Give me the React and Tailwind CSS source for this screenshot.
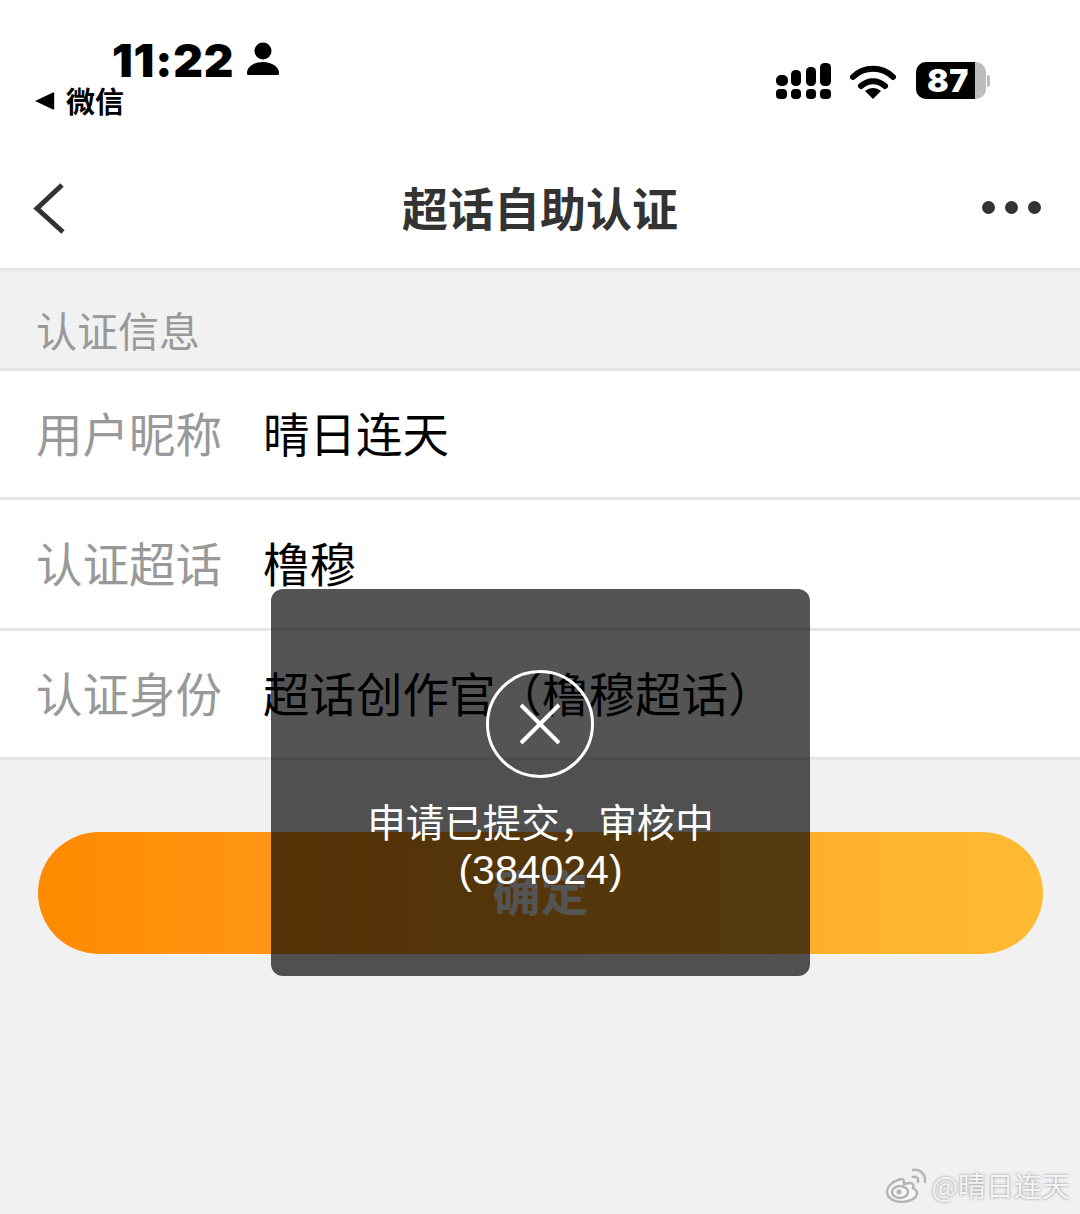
import React from 'react';

const CJK = { fontFamily: '"Noto Sans CJK SC", "Noto Sans", sans-serif' };

// Barre de statut
const StatusBar = () => (
  <div className="flex h-[150px] justify-between bg-white">
    <div className="flex flex-col pl-[35px] pt-[37px]">
      <div className="ml-[77px] flex h-[46px] items-center gap-[13px]">
        <span className="text-[46px] leading-[46px] font-black tracking-[0.8px] text-black" style={{ fontFamily: 'Inter, sans-serif' }}>11:22</span>
        <svg width="32" height="34" viewBox="0 0 32 34" className="mb-[2px]">
          <circle cx="16" cy="9" r="8.5" fill="#000" />
          <path d="M1 33c-1 0-1-1-1-2 0-6 7-11 16-11s16 5 16 11c0 1 0 2-1 2z" fill="#000" />
        </svg>
      </div>
      <div className="flex h-[35px] items-center gap-[11px]">
        <svg width="20" height="20" viewBox="0 0 20 20"><path d="M0 10 18 1.5c.8-.3 1.2 0 1.2.8v15.4c0 .8-.4 1.100-1.200.8z" fill="#000" /></svg>
        <span className="text-[29px] leading-[35px] font-bold text-black" style={CJK}>微信</span>
      </div>
    </div>
    <div className="flex items-start gap-[18px] pt-[62px] pr-[90px]">
      <svg width="56" height="38" viewBox="0 0 56 38" className="ml-[-1px]">
        <rect x="0" y="13" width="12" height="11" rx="5" fill="#000" />
        <rect x="15" y="8" width="10" height="16" rx="4.5" fill="#000" />
        <rect x="30" y="5" width="10" height="19" rx="4.5" fill="#000" />
        <rect x="44" y="1" width="11" height="23" rx="4.5" fill="#000" />
        <rect x="0" y="27" width="11" height="10" rx="4" fill="#000" />
        <rect x="15" y="27" width="10" height="10" rx="4" fill="#000" />
        <rect x="30" y="27" width="10" height="10" rx="4" fill="#000" />
        <rect x="44" y="27" width="11" height="10" rx="4" fill="#000" />
      </svg>
      <svg width="46" height="38" viewBox="0 0 46 38" className="mt-[1px]">
        <path d="M3 14C14 3 32 3 43 14" fill="none" stroke="#000" strokeWidth="6" strokeLinecap="round" />
        <path d="M11 23c7-6.500 17-6.500 24 0" fill="none" stroke="#000" strokeWidth="6" strokeLinecap="round" />
        <path d="M15 28c5-4 11-4 16 0L23 36z" fill="#000" />
      </svg>
      <div className="ml-[2px] flex items-center">
        <div className="flex h-[37px] w-[70px] items-center rounded-[10px] bg-[#bdbdbd]">
          <div className="flex h-full w-[59px] items-center rounded-l-[10px] bg-black pl-[11px]">
            <span className="text-[32px] leading-none font-black tracking-[0.5px] text-white" style={{ fontFamily: 'Inter, sans-serif' }}>87</span>
          </div>
        </div>
        <div className="ml-[1px] h-[12px] w-[3px] rounded-r-[3px] bg-[#bdbdbd]" />
      </div>
    </div>
  </div>
);

// Barre de navigation
const NavBar = () => (
  <div className="grid h-[121px] grid-cols-3 items-center border-b-[3px] border-[#e6e6e6] bg-white pr-[39px] pl-[33px]">
    <svg width="33" height="52" viewBox="0 0 33 52" className="mt-[-1px]">
      <path d="M29 2 4 25.500 30 49" fill="none" stroke="#333" strokeWidth="5" />
    </svg>
    <span className="ml-[6px] mt-[-7px] justify-self-center text-[46px] leading-none font-bold whitespace-nowrap text-[#333]" style={CJK}>超话自助认证</span>
    <div className="mt-[-3px] flex gap-[10px] justify-self-end">
      <span className="h-[13px] w-[13px] rounded-full bg-[#333]" />
      <span className="h-[13px] w-[13px] rounded-full bg-[#333]" />
      <span className="h-[13px] w-[13px] rounded-full bg-[#333]" />
    </div>
  </div>
);

const InfoRow = ({ label, value, h }) => (
  <div className={`flex items-center border-b-[3px] border-[#e6e6e6] bg-white pb-[4px] pl-[36px] ${h}`}>
    <span className="w-[227px] text-[46.5px] leading-none text-[#999]" style={CJK}>{label}</span>
    <span className="text-[46.5px] leading-none whitespace-nowrap text-black" style={CJK}>{value}</span>
  </div>
);

// Toast d'erreur par-dessus le formulaire
const Toast = () => (
  <div className="absolute top-[589px] left-[271px] flex h-[387px] w-[539px] flex-col items-center rounded-[12px] bg-[rgba(0,0,0,0.67)] pt-[81px]">
    <svg width="108" height="108" viewBox="0 0 108 108" className="ml-[-1px]">
      <circle cx="54" cy="54" r="52.500" fill="none" stroke="#fff" strokeWidth="3" />
      <path d="M35 35 73 73M73 35 35 73" fill="none" stroke="#fff" strokeWidth="4" />
    </svg>
    <div className="mt-[19px] text-center text-white">
      <div className="text-[38.5px] leading-[47px] whitespace-nowrap" style={CJK}>申请已提交，审核中</div>
      <div className="mt-[3px] text-[41px] leading-[47px]" style={{ fontFamily: '"Liberation Sans", sans-serif' }}>(384024)</div>
    </div>
  </div>
);

const Watermark = () => (
  <div className="absolute right-[10px] bottom-[11px] flex items-center gap-[4px]">
    <svg width="42" height="36" viewBox="0 0 42 36">
      <path d="M16 12C8 13 1 19 1 25c0 6 7 10 15 10s15-4 15-9c0-3-3-4-4-5 1-3 0-5-3-5-3 0-5 1-6 1 0-3-1-5-2-5z" fill="#f7f7f7" stroke="#b5b5b5" strokeWidth="2.500" />
      <ellipse cx="14" cy="25" rx="8" ry="6" fill="none" stroke="#b5b5b5" strokeWidth="2.500" />
      <circle cx="13" cy="25" r="2.500" fill="#b5b5b5" />
      <path d="M27 3c7-1 13 4 12 12M27 10c3-1 6 1 5 5" fill="none" stroke="#b5b5b5" strokeWidth="2.500" strokeLinecap="round" />
    </svg>
    <span className="text-[28px] leading-none text-[#f4f4f4] [text-shadow:0_0_3px_#888]" style={CJK}>@晴日连天</span>
  </div>
);

export default function App() {
  return (
    <div className="relative h-[1214px] w-[1080px] overflow-hidden bg-[#f1f1f1]">
      <StatusBar />
      <NavBar />
      <div className="flex h-[100px] items-center border-b-[3px] border-[#e6e6e6] pt-[20px] pl-[36px]">
        <span className="text-[41px] leading-none text-[#999]" style={CJK}>认证信息</span>
      </div>
      <InfoRow label="用户昵称" value="晴日连天" h="h-[129px]" />
      <InfoRow label="认证超话" value="橹穆" h="h-[131px]" />
      <InfoRow label="认证身份" value="超话创作官（橹穆超话）" h="h-[129px]" />
      <div className="mt-[72px] ml-[38px] flex h-[122px] w-[1005px] items-center justify-center rounded-[61px] bg-gradient-to-r from-[#ff8a00] to-[#ffbb33] pb-[6px]">
        <span className="text-[48px] leading-none font-bold text-white" style={CJK}>确定</span>
      </div>
      <Toast />
      <Watermark />
    </div>
  );
}
